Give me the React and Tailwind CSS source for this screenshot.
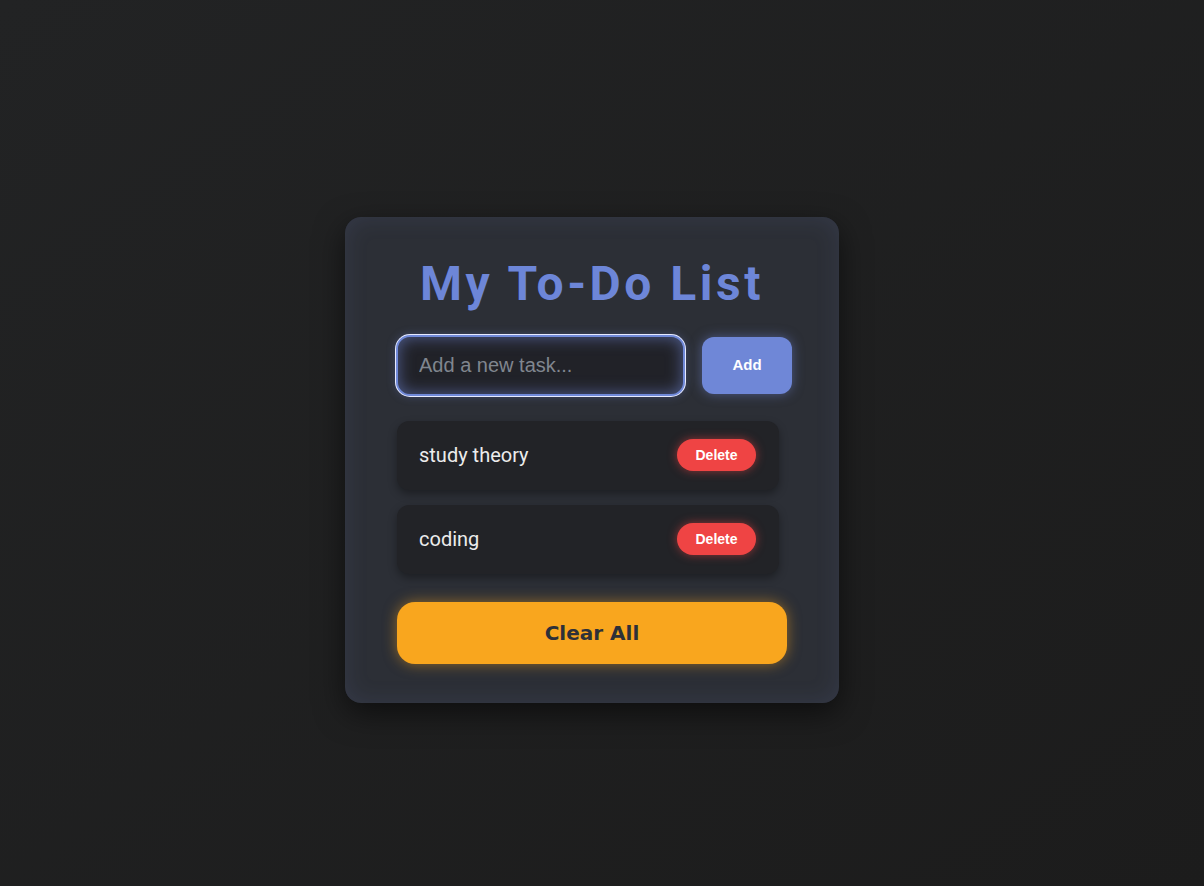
import { useState } from 'react'

const INITIAL_TASKS = ['study theory', 'coding']

export default function App() {
  const [tasks, setTasks] = useState(INITIAL_TASKS)
  const [text, setText] = useState('')

  const addTask = () => {
    if (!text.trim()) return
    setTasks([...tasks, text.trim()])
    setText('')
  }

  return (
    <div className="min-h-[886px] w-full bg-gradient-to-br from-[#222324] to-[#1c1c1c] pt-[217px] pl-[345px] font-['Liberation_Sans',Arial,sans-serif]">
      <div className="w-[494px] rounded-[16px] bg-[#2c2f36] px-[52px] pt-[38px] pb-[39px] shadow-[inset_0_0_24px_rgba(120,140,210,0.12),0_10px_30px_rgba(0,0,0,0.55)]">
        <h1 className="text-center font-['Roboto',sans-serif] text-[48px] font-bold leading-[1.2] tracking-[3.5px] text-[#6d86d8]">
          My To-Do List
        </h1>

        <div className="mt-[22px] -ml-[1px] flex w-[397px] items-center gap-[17px]">
          <input
            value={text}
            onChange={(e) => setText(e.target.value)}
            placeholder="Add a new task..."
            className="h-[61px] w-[289px] rounded-[14px] border-2 border-[#7089d8] bg-[#212228] px-[21px] text-[20px] text-[#e8e8e8] placeholder-[#80868f] outline-none shadow-[0_0_0_1px_#e6eaff,inset_0_0_16px_rgba(111,134,214,0.6),0_0_10px_rgba(111,134,214,0.35)]"
          />
          <button
            onClick={addTask}
            className="h-[57px] w-[90px] rounded-[12px] bg-[#6f87d7] text-[15px] font-bold text-white shadow-[0_0_12px_rgba(111,134,214,0.5)]"
          >
            Add
          </button>
        </div>

        <ul className="mt-[25px] flex flex-col gap-[15px]">
          {tasks.map((task, i) => (
            <li
              key={task + i}
              className="flex h-[69px] w-[382px] items-center justify-between rounded-[12px] bg-[#222327] pl-[22px] pr-[23px] shadow-[0_4px_8px_rgba(0,0,0,0.35)]"
            >
              <span className="font-['Roboto',sans-serif] text-[20px] text-[#ececec]">{task}</span>
              <button
                onClick={() => setTasks(tasks.filter((_, j) => j !== i))}
                className="h-[32px] w-[79px] rounded-full bg-[#ef4444] text-[14px] font-bold text-white shadow-[0_0_10px_rgba(239,68,68,0.55)]"
              >
                Delete
              </button>
            </li>
          ))}
        </ul>

        <button
          onClick={() => setTasks([])}
          className="mt-[28px] h-[62px] w-full rounded-[18px] bg-[#f9a61e] font-['DejaVu_Sans',sans-serif] text-[20px] font-bold text-[#2d3038] shadow-[0_0_14px_rgba(249,166,30,0.5)]"
        >
          Clear All
        </button>
      </div>
    </div>
  )
}
